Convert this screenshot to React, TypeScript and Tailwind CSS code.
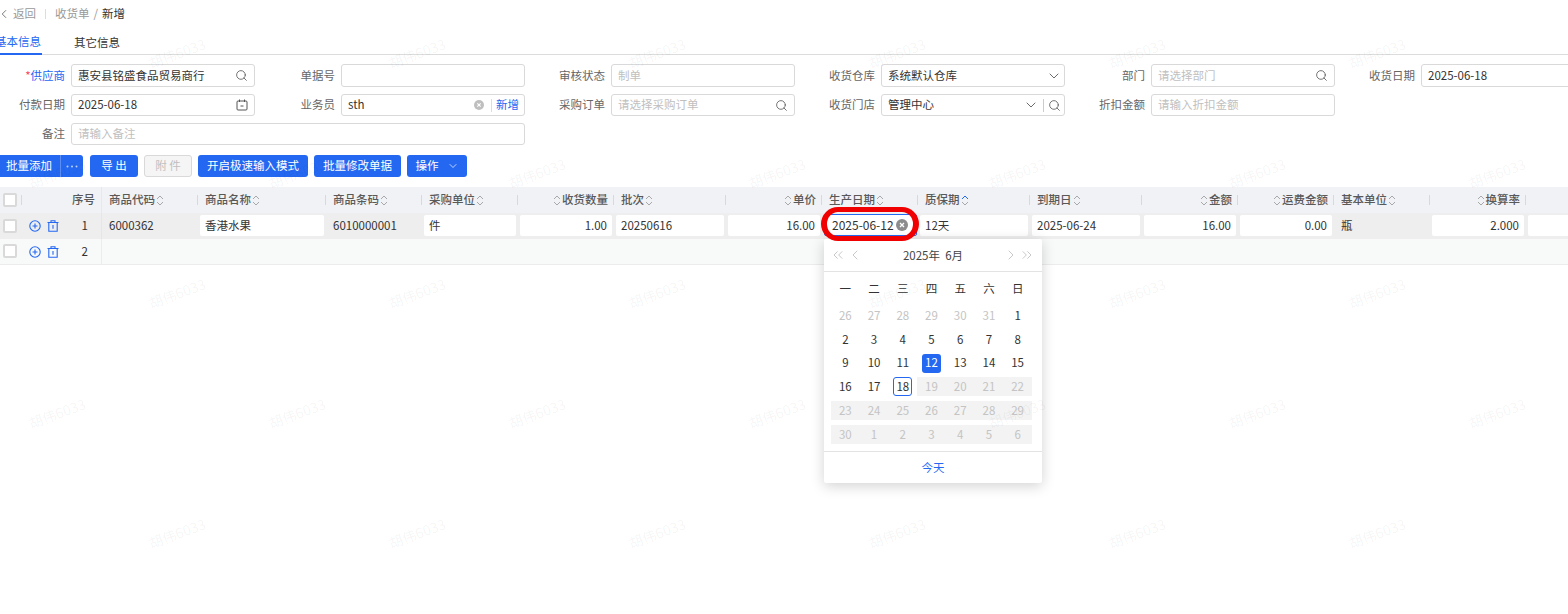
import React from "react";
import { Search, ChevronLeft, ChevronRight, ChevronDown, ChevronsLeft, ChevronsRight } from "lucide-react";

const BLUE = "#2468f2";

function Sort({ active }: { active?: boolean }) {
  return (
    <svg width="8" height="13" viewBox="0 0 8 13" fill="none" className="shrink-0 mx-[1px]">
      <path d="M1 5L4 2L7 5" stroke={active ? BLUE : "#a8a8a8"} strokeWidth="1" />
      <path d="M1 8L4 11L7 8" stroke="#a8a8a8" strokeWidth="1" />
    </svg>
  );
}

function ClearIcon({ size = 11, color = "#bfbfbf", className = "" }: { size?: number; color?: string; className?: string }) {
  return (
    <svg width={size} height={size} viewBox="0 0 12 12" className={`shrink-0 ${className}`}>
      <circle cx="6" cy="6" r="6" fill={color} />
      <path d="M4 4L8 8M8 4L4 8" stroke="#fff" strokeWidth="1.3" />
    </svg>
  );
}

function CalendarIcon() {
  return (
    <svg width="12" height="12" viewBox="0 0 12 12" fill="none" className="shrink-0">
      <rect x="1" y="2" width="10" height="9" rx="1" stroke="#555" />
      <path d="M3.5 0.5V3M8.5 0.5V3M4.5 7H7.5" stroke="#555" />
    </svg>
  );
}

function AddIcon() {
  return (
    <svg width="12" height="12" viewBox="0 0 12 12" fill="none" className="shrink-0">
      <circle cx="6" cy="6" r="5.2" stroke={BLUE} strokeWidth="1.1" />
      <path d="M3.5 6H8.5M6 3.5V8.5" stroke={BLUE} strokeWidth="1.1" />
    </svg>
  );
}

function TrashIcon() {
  return (
    <svg width="12" height="12" viewBox="0 0 12 12" fill="none" className="shrink-0">
      <path d="M0.5 2.5H11.5M4 2.5V0.8H8V2.5M1.8 2.5V11.2H10.2V2.5M6 5V8.8" stroke={BLUE} strokeWidth="1.1" />
    </svg>
  );
}

function DotsIcon() {
  return (
    <svg width="12" height="3" viewBox="0 0 12 3" className="shrink-0">
      <circle cx="1.5" cy="1.5" r="1" fill="#bcd0fa" />
      <circle cx="6" cy="1.5" r="1" fill="#bcd0fa" />
      <circle cx="10.5" cy="1.5" r="1" fill="#bcd0fa" />
    </svg>
  );
}

function Checkbox() {
  return <div className="w-[14px] h-[14px] bg-white border-2 border-[#d9d9d9] rounded-[2px] shrink-0" />;
}

function Label({ children }: { children: React.ReactNode }) {
  return <span className="w-[80px] text-right text-[#666] shrink-0 mr-[6px]">{children}</span>;
}

function Field({
  label,
  children,
  h = "h-[23px]",
}: {
  label: React.ReactNode;
  children?: React.ReactNode;
  h?: string;
}) {
  return (
    <div className="flex items-center w-[270px]">
      <Label>{label}</Label>
      <div className={`w-[184px] ${h} border border-[#d9d9d9] rounded-[3px] flex items-center pl-[6px] pr-[6px] bg-white`}>
        {children}
      </div>
    </div>
  );
}

const Placeholder = ({ children }: { children: React.ReactNode }) => (
  <span className="text-[#bfbfbf] flex-1">{children}</span>
);
const Value = ({ children }: { children: React.ReactNode }) => <span className="text-[#333] flex-1">{children}</span>;
const Mag = () => <Search size={13} color="#555" strokeWidth={1.5} className="shrink-0" />;

type Col = { label: string; right?: boolean; active?: boolean };
const cols: Col[] = [
  { label: "商品代码" },
  { label: "商品名称" },
  { label: "商品条码" },
  { label: "采购单位" },
  { label: "收货数量", right: true },
  { label: "批次" },
  { label: "单价", right: true },
  { label: "生产日期" },
  { label: "质保期", active: true },
  { label: "到期日" },
  { label: "金额", right: true },
  { label: "运费金额", right: true },
  { label: "基本单位" },
  { label: "换算率", right: true },
  { label: "", right: true },
];

const GRID =
  "grid grid-cols-[22px_80px_96px_128px_96px_96px_96px_112px_96px_96px_112px_112px_96px_96px_96px_96px_96px]";

function Box({ children, right }: { children?: React.ReactNode; right?: boolean }) {
  return (
    <div className="h-full pl-[2px] pr-[2px] pt-[2px]">
      <div
        className={`w-full h-[21px] bg-white rounded-[2px] flex items-center px-[5px] text-[#333] ${
          right ? "justify-end" : ""
        }`}
      >
        {children}
      </div>
    </div>
  );
}

const Plain = ({ children }: { children?: React.ReactNode }) => (
  <div className="h-full flex items-center pl-[7px] text-[#333]">{children}</div>
);

const watermarks: { x: number; y: number }[] = [];
[53, 173, 293, 413, 533].forEach((y, r) => {
  for (let i = 0; i < 7; i++) {
    watermarks.push({ x: (r % 2 === 0 ? 177 : 57) + i * 240, y });
  }
});

const week = ["一", "二", "三", "四", "五", "六", "日"];
type D = { t: number; off?: boolean; range?: boolean; sel?: boolean; today?: boolean };
const m = (t: number): D => ({ t });
const o = (t: number): D => ({ t, off: true });
const r = (t: number): D => ({ t, off: true, range: true });
const dayRows: D[][] = [
  [o(26), o(27), o(28), o(29), o(30), o(31), m(1)],
  [m(2), m(3), m(4), m(5), m(6), m(7), m(8)],
  [m(9), m(10), m(11), { t: 12, sel: true }, m(13), m(14), m(15)],
  [m(16), m(17), { t: 18, today: true }, r(19), r(20), r(21), r(22)],
  [r(23), r(24), r(25), r(26), r(27), r(28), r(29)],
  [r(30), r(1), r(2), r(3), r(4), r(5), r(6)],
];

function Calendar() {
  return (
    <div className="absolute left-[824px] top-[239px] w-[218px] h-[244px] bg-white rounded-[2px] shadow-[0_3px_14px_rgba(0,0,0,0.18)] flex flex-col z-10">
      <div className="h-[33px] shrink-0 border-b border-[#e3e3e3] flex items-center pl-[6px] pr-[7px] text-[#bbb]">
        <ChevronsLeft size={16} strokeWidth={1.2} />
        <ChevronLeft size={16} strokeWidth={1.2} className="ml-px" />
        <span className="flex-1 text-center text-[#444] pt-[2px]">2025年&nbsp;&nbsp;6月</span>
        <ChevronRight size={16} strokeWidth={1.2} />
        <ChevronsRight size={16} strokeWidth={1.2} />
      </div>
      <div className="flex-1 pl-[7px] pr-[10px] pt-[2px]">
        <div className="grid grid-cols-7 h-[30px] items-center text-[#333]">
          {week.map((w) => (
            <span key={w} className="text-center">{w}</span>
          ))}
        </div>
        <div className="flex flex-col">
          {dayRows.map((row, i) => (
            <div key={i} className="grid grid-cols-7 h-[23.7px] items-center">
              {row.map((d, j) => (
                <div key={j} className={`h-[19px] flex items-center justify-center ${d.range ? "bg-[#f3f3f3]" : ""}`}>
                  <span
                    className={`w-[19px] h-[19px] flex items-center justify-center rounded-[3px] ${
                      d.sel
                        ? "bg-[#2468f2] text-white"
                        : d.today
                        ? "border border-[#2468f2] text-[#333]"
                        : d.off
                        ? "text-[#c4c4c4]"
                        : "text-[#333]"
                    }`}
                  >
                    {d.t}
                  </span>
                </div>
              ))}
            </div>
          ))}
        </div>
      </div>
      <div className="h-[32px] shrink-0 border-t border-[#e3e3e3] flex items-center justify-center text-[#2468f2]">今天</div>
    </div>
  );
}

export default function App() {
  return (
    <div className="relative w-[1568px] h-[614px] overflow-hidden bg-white text-[11.5px] leading-none font-['Noto_Sans_CJK_SC','Noto_Sans',sans-serif] text-[#333]">
      {/* breadcrumb */}
      <div className="h-[28px] flex items-center text-[#999]">
        <ChevronLeft size={14} strokeWidth={1.5} className="text-[#666] -ml-[3px]" />
        <span className="ml-[2px]">返回</span>
        <span className="w-px h-[10px] bg-[#ddd] ml-[9px] mr-[9px]" />
        <span>收货单</span>
        <span className="mx-[4px]">/</span>
        <span className="text-[#333]">新增</span>
      </div>

      {/* tabs */}
      <div className="h-[27px] border-b border-[#dcdcdc] flex -ml-[6px] gap-[32px]">
        <div className="w-[48px] h-[27px] flex items-center justify-center text-[#2468f2] border-b-2 border-[#2468f2] pt-[2px]">
          基本信息
        </div>
        <div className="w-[46px] h-[27px] flex items-center justify-center text-[#333] pt-[2px]">其它信息</div>
      </div>

      {/* form */}
      <div className="-ml-[15px] mt-[9px] flex flex-col gap-[7px]">
        <div className="flex">
          <Field
            label={
              <>
                <span className="text-[#f5455c]">*</span>
                <span className="text-[#2468f2]">供应商</span>
              </>
            }
          >
            <Value>惠安县铭盛食品贸易商行</Value>
            <Mag />
          </Field>
          <Field label="单据号" />
          <Field label="审核状态">
            <Placeholder>制单</Placeholder>
          </Field>
          <Field label="收货仓库">
            <Value>系统默认仓库</Value>
            <ChevronDown size={16} color="#555" strokeWidth={1.3} className="-mr-[4px]" />
          </Field>
          <Field label="部门">
            <Placeholder>请选择部门</Placeholder>
            <Mag />
          </Field>
          <Field label="收货日期">
            <Value>2025-06-18</Value>
          </Field>
        </div>
        <div className="flex">
          <Field label="付款日期" h="h-[22px]">
            <Value>2025-06-18</Value>
            <CalendarIcon />
          </Field>
          <Field label="业务员" h="h-[22px]">
            <Value>sth</Value>
            <ClearIcon size={10} />
            <span className="w-px h-[13px] bg-[#ddd] ml-[7px] mr-[4px]" />
            <span className="text-[#2468f2] -mr-px">新增</span>
          </Field>
          <Field label="采购订单" h="h-[22px]">
            <Placeholder>请选择采购订单</Placeholder>
            <Mag />
          </Field>
          <Field label="收货门店" h="h-[22px]">
            <Value>管理中心</Value>
            <ChevronDown size={16} color="#555" strokeWidth={1.3} />
            <span className="w-px h-[13px] bg-[#ccc] ml-[4px] mr-[4px]" />
            <span className="-mr-[3px] flex"><Mag /></span>
          </Field>
          <Field label="折扣金额" h="h-[22px]">
            <Placeholder>请输入折扣金额</Placeholder>
          </Field>
        </div>
        <div className="flex items-center">
          <Label>备注</Label>
          <div className="w-[454px] h-[22px] border border-[#d9d9d9] rounded-[3px] flex items-center px-[6px]">
            <Placeholder>请输入备注</Placeholder>
          </div>
        </div>
      </div>

      {/* buttons */}
      <div className="mt-[10px] -ml-[3px] flex gap-[6px] text-white">
        <div className="flex h-[22px] w-[86px] bg-[#2468f2] rounded-[3px] mr-px">
          <div className="w-[64px] shrink-0 flex items-center justify-center pl-[1px] border-r border-[#5a8ef5]">批量添加</div>
          <div className="flex-1 flex items-center justify-center">
            <DotsIcon />
          </div>
        </div>
        <div className="h-[22px] w-[48px] bg-[#2468f2] rounded-[3px] flex items-center justify-center">导 出</div>
        <div className="h-[22px] w-[48px] bg-[#f5f5f5] border border-[#d9d9d9] rounded-[3px] flex items-center justify-center text-[#bfbfbf]">
          附 件
        </div>
        <div className="h-[22px] w-[110px] bg-[#2468f2] rounded-[3px] flex items-center justify-center">开启极速输入模式</div>
        <div className="h-[22px] w-[87px] bg-[#2468f2] rounded-[3px] flex items-center justify-center">批量修改单据</div>
        <div className="h-[22px] w-[60px] bg-[#2468f2] rounded-[3px] flex items-center justify-center gap-[8px]">
          操作
          <ChevronDown size={12} strokeWidth={1.4} />
        </div>
      </div>

      {/* table */}
      <div className="mt-[10px] w-[1700px]">
        <div className={`${GRID} h-[26px] bg-[#f0f2f5] text-[#595959] font-medium`}>
          <div className="flex items-center pl-[3px] relative">
            <Checkbox />
            <span className="absolute right-0 top-[8px] w-px h-[10px] bg-[#d9d9d9]" />
          </div>
          <div className="flex items-center justify-end pr-[6px] border-r border-[#e6e8eb]">序号</div>
          {cols.map((c, i) => (
            <div
              key={i}
              className={`flex items-center relative ${c.right ? "justify-end pr-[6px]" : "pl-[7px]"}`}
            >
              {c.right && <Sort active={c.active} />}
              <span className="whitespace-nowrap">{c.label}</span>
              {!c.right && <Sort active={c.active} />}
              <span className="absolute right-0 top-[8px] w-px h-[10px] bg-[#d9d9d9]" />
            </div>
          ))}
        </div>

        <div className={`${GRID} h-[26px] bg-[#eeeeee]`}>
          <div className="flex items-start pl-[3px] pt-[6px]">
            <Checkbox />
          </div>
          <div className="flex items-center relative border-r border-[#e6e6e6]">
            <span className="ml-[7px]"><AddIcon /></span>
            <span className="ml-[6px]"><TrashIcon /></span>
            <span className="absolute right-[13px]">1</span>
          </div>
          <Plain>6000362</Plain>
          <Box>香港水果</Box>
          <Plain>6010000001</Plain>
          <Box>件</Box>
          <Box right>1.00</Box>
          <Box>20250616</Box>
          <Box right>16.00</Box>
          <div className="h-full pl-[2px] pt-[1px]">
            <div className="w-[93px] h-[22px] bg-white border border-[#2468f2] rounded-[2px] flex items-center pl-[7px] text-[12px] text-[#333]">
              2025-06-12
            </div>
          </div>
          <Box>12天</Box>
          <Box>2025-06-24</Box>
          <Box right>16.00</Box>
          <Box right>0.00</Box>
          <Plain>瓶</Plain>
          <Box right>2.000</Box>
          <Box />
        </div>

        <div className={`${GRID} h-[26px] bg-[#f8f9f9] border-b border-[#ececec]`}>
          <div className="flex items-start pl-[3px] pt-[5px]">
            <Checkbox />
          </div>
          <div className="flex items-center relative border-r border-[#ececec]">
            <span className="ml-[7px]"><AddIcon /></span>
            <span className="ml-[6px]"><TrashIcon /></span>
            <span className="absolute right-[13px]">2</span>
          </div>
        </div>
      </div>

      {/* red annotation around the date field */}
      <div className="absolute left-[821px] top-[207px] w-[98px] h-[34px] rounded-full border-x-[6px] border-y-[5px] border-[#f00000] z-20 flex items-center justify-end pr-[5px]">
        <ClearIcon size={12} color="#8c8c8c" className="mt-[2px]" />
      </div>

      <Calendar />

      {/* watermark */}
      <div className="absolute inset-0 pointer-events-none z-30">
        {watermarks.map((w, i) => (
          <span
            key={i}
            className="absolute w-[80px] h-[20px] -ml-[40px] -mt-[10px] flex items-center justify-center text-[14px] text-black/[0.05] -rotate-[20deg] whitespace-nowrap"
            style={{ left: w.x, top: w.y }}
          >
            胡伟6033
          </span>
        ))}
      </div>
    </div>
  );
}
